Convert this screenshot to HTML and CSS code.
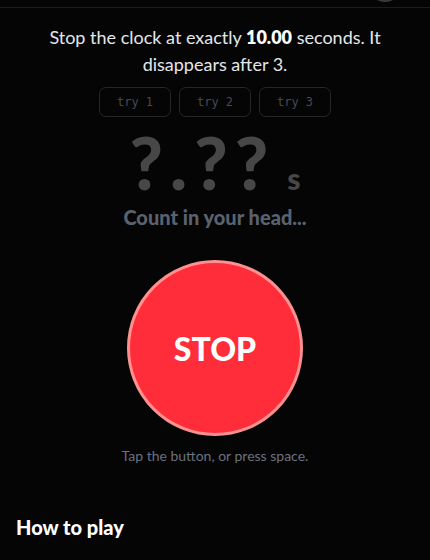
FILE: index.html
```html
<!DOCTYPE html>
<html lang="en">
<head>
    <meta charset="UTF-8">
    <title>Stop the clock</title>
    <link rel="stylesheet" href="styles.css">
</head>
<body>
<header class="topbar">
    <span class="avatar"></span>
</header>

<main class="game">
    <p class="intro">Stop the clock at exactly <b>10.00</b> seconds. It disappears after 3.</p>
    <div class="tries">
        <span class="try">try 1</span>
        <span class="try">try 2</span>
        <span class="try">try 3</span>
    </div>
    <div class="clock">
        <span class="digits">?.??</span><span class="unit">s</span>
    </div>
    <p class="status">Count in your head...</p>
    <button class="stop" id="stop">STOP</button>
    <p class="hint">Tap the button, or press space.</p>
</main>

<section class="rules">
    <h2>How to play</h2>
</section>
</body>
</html>
```

FILE: styles.css
```css
html, body {
    margin: 0;
    padding: 0;
    background: #050505;
    color: #e4e6ea;
    font-family: "Lato", "Noto Sans", sans-serif;
}

.topbar {
    height: 7px;
    border-bottom: 1px solid #1c1c1c;
    position: relative;
}

.topbar .avatar {
    position: absolute;
    right: 28px;
    bottom: 5px;
    width: 30px;
    height: 30px;
    border-radius: 50%;
    border: 2px solid #3a3a3a;
}

.game {
    display: flex;
    flex-direction: column;
    align-items: center;
    padding: 0 36px;
}

.intro {
    margin: 16px 0 0;
    font-size: 18px;
    line-height: 27px;
    text-align: center;
}

.intro b {
    color: #fff;
    font-weight: 800;
}

.tries {
    display: flex;
    gap: 8px;
    margin-top: 9px;
}

.try {
    width: 70px;
    height: 28px;
    border: 1px solid #262626;
    border-radius: 7px;
    display: flex;
    align-items: center;
    justify-content: center;
    font-family: "DejaVu Sans Mono", monospace;
    font-size: 12px;
    color: #434a55;
}

.clock {
    display: flex;
    align-items: baseline;
    margin-top: 12px;
    height: 66px;
    color: #474747;
    font-weight: 900;
}

.clock .digits {
    font-size: 72px;
    line-height: 66px;
    letter-spacing: 7px;
}

.clock .unit {
    font-size: 30px;
    margin-left: 12px;
}

.status {
    margin: 10px 0 0;
    font-size: 20px;
    font-weight: 900;
    color: #5a6270;
}

.stop {
    margin-top: 31px;
    width: 176px;
    height: 176px;
    border-radius: 50%;
    border: 3px solid #ff9090;
    background: #ff2d3a;
    color: #fff;
    font-family: inherit;
    font-size: 32px;
    font-weight: 900;
    cursor: pointer;
}

.hint {
    margin: 11px 0 0;
    font-size: 14px;
    color: #6b7280;
}

.rules {
    padding: 51px 16px 0;
}

.rules h2 {
    margin: 0;
    font-size: 20px;
    font-weight: 900;
    color: #fff;
}
```
